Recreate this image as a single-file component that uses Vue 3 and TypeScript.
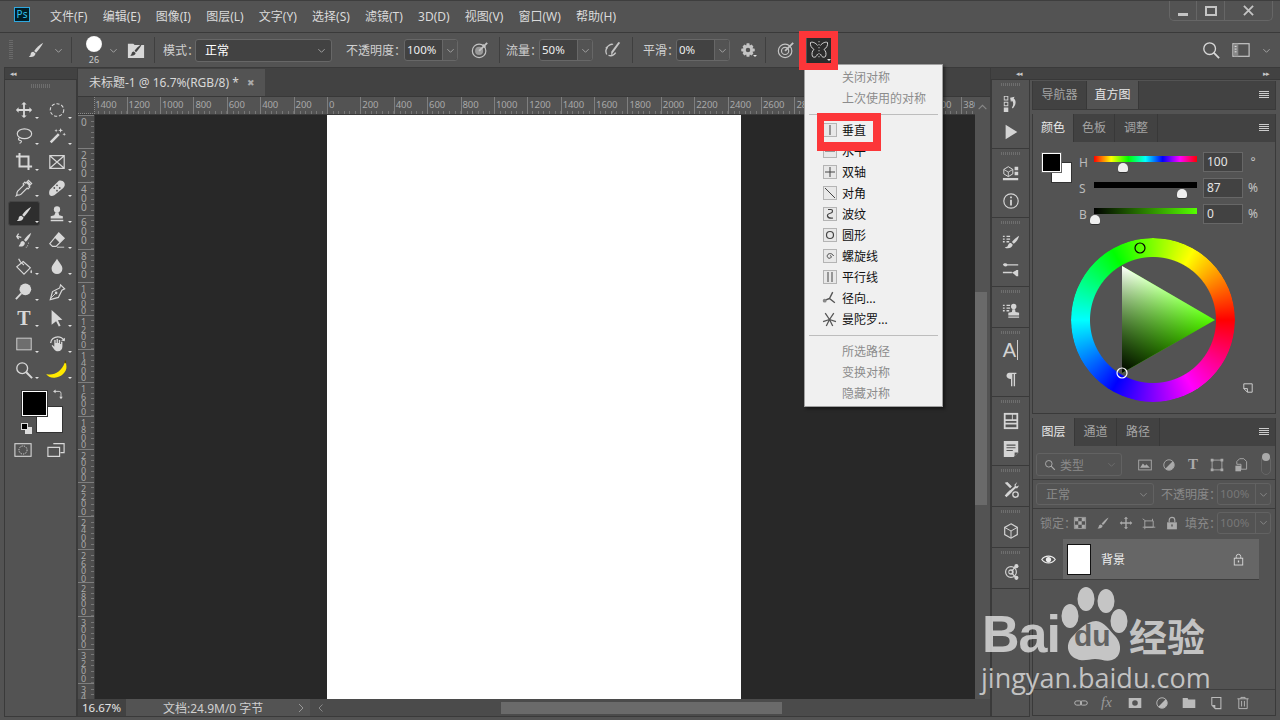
<script setup lang="ts">
const menus = ['文件(F)', '编辑(E)', '图像(I)', '图层(L)', '文字(Y)', '选择(S)', '滤镜(T)', '3D(D)', '视图(V)', '窗口(W)', '帮助(H)']

const S = 'fill="none" stroke="currentColor"'
const brush = '<path d="M18 2C14 4 10 8 8 11l2 2c3-3 6-7 8-11z"/><path d="M7 12c-2 0-3 1.500-3 3 0 1-1 2-2 2.500 3 1 7 0 7.500-3.500z"/>'
const ic: Record<string, string> = {
  move: '<path d="M10 1l3 3h-2v5h5V7l3 3-3 3v-2h-5v5h2l-3 3-3-3h2v-5H4v2l-3-3 3-3v2h5V4H7z"/>',
  marquee: `<ellipse cx="10" cy="10" rx="7.500" ry="7" ${S} stroke-width="1.200" stroke-dasharray="3.500 2"/>`,
  lasso: `<ellipse cx="10.500" cy="7.500" rx="8" ry="5.500" ${S} stroke-width="1.300"/><path d="M5 12c-2 1-1 3 1 3s1 3-1 3" ${S} stroke-width="1.300"/>`,
  wand: `<path d="M3 17l9-9 2 2-9 9z" transform="translate(-1 -1)"/><path d="M14 1l.7 2 2 .7-2 .7-.7 2-.7-2-2-.7 2-.7zM18 6l.5 1.500 1.500.5-1.500.5-.5 1.500-.5-1.500L16 8l1.500-.5zM9 2l.5 1.500L11 4l-1.500.5L9 6l-.5-1.500L7 4l1.500-.5z"/>`,
  crop: `<path d="M1 4h14v15M5 0v15h14" ${S} stroke-width="2.200"/>`,
  frame: `<path d="M2 3h16v14H2zM2 3l16 14M18 3L2 17" ${S} stroke-width="1.300"/>`,
  dropper: `<path d="M15 1.500l3.500 3.500-3 3 1 1-2 2-1-1-7 7c-1 1-3 1-4 1l-1 .500 .5-1c0-1 0-3 1-4l7-7-1-1 2-2 1 1z" ${S} stroke-width="1.300"/><path d="M14.500 2.500l3 3-2 2-3-3z"/>`,
  band: '<path d="M2 12l10-10c2-1 5 0 6 2s1 4-1 6L7 18c-2 1-4 1-5 0s-1-4 0-6z"/><g fill="#535353"><circle cx="10" cy="7" r="1"/><circle cx="13" cy="10" r="1"/><circle cx="7" cy="10" r="1"/><circle cx="10" cy="13" r="1"/></g>',
  brush,
  stamp: '<circle cx="10" cy="5" r="3.500"/><path d="M8.500 8h3l1 3.500 4 1V15H3v-2.500l4-1zM3 16.500h14V18H3z"/>',
  history: `<path d="M18 2c-3 2-6 5-8 8l2 2c3-3 5-6 6-10z"/><path d="M9 11c-2 0-3 1-3 3l-2 3c3 1 7 0 7-4z"/><path d="M2 6l5 1M4 3l-2 3 2 3" ${S} stroke-width="1.400"/><path d="M15 13v1M14 16v1M12 18h1" ${S}/>`,
  eraser: `<path d="M12 2l6 6-9 9H5l-3-3z" ${S} stroke-width="1.300"/><path d="M12 2l6 6-5 5-6-6z"/><path d="M10 18h8" ${S}/>`,
  bucket: `<path d="M9 5l8 7-7 7-8-8z" ${S} stroke-width="1.300"/><path d="M4 2c1 3 3 5 6 7" ${S} stroke-width="1.300"/><path d="M18 14c1 1.500 1.500 4 0 4s-1-2.500 0-4z"/>`,
  drop: '<path d="M10 2c2 4 6 7 6 11a6 6 0 0 1-12 0c0-4 4-7 6-11z"/>',
  dodge: `<circle cx="11.500" cy="7" r="6.500"/><path d="M7 11.500L1 18" ${S} stroke-width="2"/>`,
  pen: `<path d="M14 2l4.500 4.500-3 1.500-4 8-9 2.500 2.500-9 8-4z" ${S} stroke-width="1.300"/><circle cx="9" cy="11" r="1.500"/><path d="M3 17l5-5" ${S}/>`,
  arrow: '<path d="M4 1l12 11-5 .5 3 6-2 1-3-6-5 4z"/>',
  rect: `<rect x="2" y="3.500" width="16" height="13" fill="#6e6e6e" stroke="currentColor"/>`,
  hand: `<path d="M7 9V5.500h1.500V9h1V4.500H11V9h1V5.500h1.500V10h1V7.500H16V13c0 3-2 5-5 5-2 0-3-1-4-2l-3-4 1-1 2 2z"/><path d="M3 9c0-4 4-7 8-7 3 0 5 1 7 4" ${S} stroke-width="1.500"/><path d="M19 3l-.5 4-4-1z"/>`,
  zoom: `<circle cx="8" cy="8" r="6" ${S} stroke-width="1.500"/><path d="M12.500 12.500L19 19" ${S} stroke-width="2.200"/>`,
  banana: '<path d="M-2 14.500C6 17 15 12 18.500 2l1.500 0 .5 4c.5 6-6 12-13 12.500-4 .3-8-1-9.500-4z" fill="#ffe900"/><path d="M18.500-.5h1.500l.2 3-1.800 0z" fill="#5a4a00"/>',
  swap: `<path d="M3 4h9a3 3 0 0 1 3 3v7" ${S} stroke-width="1.500"/><path d="M6 1v6L2 4zM12 13h6l-3 4z"/>`,
  qmask: `<rect x="1" y="3" width="18" height="14" ${S} stroke-width="1.200"/><circle cx="10" cy="10" r="4.500" ${S} stroke-dasharray="1.500 1.200"/>`,
  screen: `<path d="M7 3h12v10h-4M1 7h13v10H1z" ${S} stroke-width="1.300"/>`,
  chev: `<path d="M3 7l7 7 7-7" ${S} stroke-width="2"/>`,
  panelBrush: '<path d="M1 3h6l1.500 1.500H19V19H1z" fill="#d8d8d8"/><g fill="#444" transform="translate(2 2) scale(.8)"><path d="M18 2C14 4 10 8 8 11l2 2c3-3 6-7 8-11z"/><path d="M7 12c-2 0-3 1.500-3 3 0 1-1 2-2 2.500 3 1 7 0 7.500-3.500z"/></g>',
  air: `<circle cx="9" cy="11" r="7.500" ${S} stroke-width="1.300"/><circle cx="9" cy="11" r="4.500" fill="#9a9a9a"/><path d="M9 11l9-9M13 4l3 3" ${S} stroke-width="2"/>`,
  flow: `<path d="M2 8c4-4 7-5 8-4M3 15c-2-4-1-6 1-8M5 16c3 1 6 0 8-3" ${S} stroke-width="1.500"/><path d="M18 2l-8 11-2 3 0-4 8-11z"/>`,
  gear: '<path d="M8.500 1h3l.5 2.500 2-1 2 2-1 2 2.500.5v3L15 10.500l1 2-2 2-2-1-.5 2.500h-3L8 13.500l-2 1-2-2 1-2L2.500 10V7L5 6.500l-1-2 2-2 2 1zM10 6a2.500 2.500 0 1 0 0 5 2.500 2.500 0 0 0 0-5z" transform="translate(0 1.500)"/>',
  target: `<circle cx="9" cy="11" r="7.500" ${S} stroke-width="1.300"/><circle cx="9" cy="11" r="4" ${S} stroke-width="1.300"/><path d="M9 11l9-9" ${S} stroke-width="2"/>`,
  butterfly: `<path d="M8.500 5.500C7 3 3.500 1.500 1.500 2.500 1 5.500 2.500 8 5 9.500 3 11 2.500 14 3.500 16.500c2 1.500 4 .5 5-2.500M11.500 5.500C13 3 16.500 1.500 18.500 2.500c.5 3-1 5.500-3.500 7 2 1.500 2.500 4.500 1.500 7-2 1.500-4 .5-5-2.500" ${S} stroke-width=".9"/><path d="M10 1v18" ${S} stroke-width=".8" stroke-dasharray="1.300 1.700"/>`,
  search: `<circle cx="8.500" cy="8.500" r="6.500" ${S} stroke-width="1.500"/><path d="M13 13l6 6" ${S} stroke-width="2"/>`,
  workspace: `<rect x="1" y="3" width="18" height="14" ${S} stroke-width="1.300"/><path d="M2 3h5v14H2z" fill="#888"/><path d="M3 6h2M3 9h2M3 12h2" stroke="#eee"/>`,
  history2: '<g transform="translate(2 1)"><path d="M0 0h5v5H0zM1 1v3h3V1zM0 6.500h5v5H0zM1 7.500v3h3v-3zM0 13h5v5H0z" fill-rule="evenodd"/></g><path d="M9 3l5-1-1 2c3 2 3 7-1 11l-1-1c2-3 2-6 0-8l-1 2z"/>',
  play: '<path d="M4 2l13 8-13 8z"/>',
  cube3: `<path d="M2 6l5-3 5 3v5l-5 3-5-3z" ${S} stroke-width="1.100"/><path d="M2 6l5 3 5-3M7 9v5" ${S}/><path d="M14 3h4v4h-4zM14 8.500h4v4h-4zM1 15.500h17V18H1z"/>`,
  info: `<circle cx="10" cy="10" r="8" ${S} stroke-width="1.300"/><path d="M9 8.500h2V15H9zM9 5h2v2H9z"/>`,
  listBrush: '<path d="M1 3h2v1.500H1zM5 3h4v1.500H5zM1 6h2v1.500H1zM5 6h4v1.500H5zM1 9h2v1.500H1zM5 9h3v1.500H5z"/><path d="M19 3c-3 2-6 4-8 7l2 2c3-2 5-5 6-9z"/><path d="M10 11c-3 0-3 2-4 4l-3 1c3 2 8 1 9-3z"/>',
  sliders: '<path d="M1 4c1-2 4-2 5-.5H18V5H6c-1 1.500-4 1.500-5-1zM1 12h10v1.500H1zM11 13c2-1 4-2 5-3h2v7h-2c-1-1-3-3-5-4z"/>',
  listStamp: '<path d="M1 3h2v1.500H1zM5 3h4v1.500H5zM1 6h2v1.500H1zM5 6h4v1.500H5zM1 9h2v1.500H1zM5 9h3v1.500H5z"/><circle cx="13" cy="5" r="3"/><path d="M11.500 8h3l.5 3 4 1v3H7v-3l4-1zM7 16h12v1.500H7z"/>',
  para: '<path d="M8 3h8v1.500h-1.500V18H13V4.500h-1.500V18H10v-8c-3 0-5-1.500-5-3.500S6 3 8 3z"/>',
  props: '<path d="M2 1h16v18H2z"/><g fill="#535353"><path d="M4 3h7v5H4zM12 3h4v5h-4zM4 10h12v2H4zM4 14h12v3H4z"/></g>',
  note: '<path d="M2 1h16v13l-5 5H2z"/><g fill="#535353"><path d="M5 5h10v1.300H5zM5 8h10v1.300H5zM5 11h7v1.300H5zM14 14h4l-4 4z"/></g>',
  tools: `<path d="M3 2l6 6 2-2-5-5zM9 10l-6 6 2 2 6-6z"/><path d="M17 1l-3 3v2l-9 8 2 2 8-8h2l2-3-3 1-1-1z"/><circle cx="15" cy="15" r="3" ${S} stroke-width="1.500"/>`,
  cube: `<path d="M10 2l7 4v8l-7 4-7-4V6z" ${S} stroke-width="1.300"/><path d="M3 6l7 4 7-4M10 10v8" ${S} stroke-width="1.100"/>`,
  share: `<circle cx="10" cy="10" r="6" ${S} stroke-width="1.300"/><circle cx="10" cy="10" r="3"/><path d="M10 10l6-7M10 10l6 7" ${S} stroke-width="1.300"/><circle cx="16" cy="3.500" r="2.300"/><circle cx="16" cy="16.500" r="2.300"/><circle cx="9.500" cy="10" r="1.500" fill="#535353"/>`,
  img: `<rect x="1" y="3" width="18" height="14" ${S} stroke-width="1.300"/><path d="M3 14l4-6 3 3 2-2 5 5z"/>`,
  half: `<circle cx="10" cy="10" r="7.500" ${S} stroke-width="1.300"/><path d="M15.300 4.700A7.500 7.500 0 0 1 4.700 15.300z"/>`,
  tsel: `<path d="M3 3h14v14H3z" ${S} stroke-width="1.300"/><path d="M1 1h4v4H1zM15 1h4v4h-4zM1 15h4v4H1zM15 15h4v4h-4z"/>`,
  smart: '<path d="M8 1h6l4 4v11h-8V9H4V5z" fill="none" stroke="currentColor" stroke-width="1.300"/><path d="M2 11h8v8H2z"/>',
  lens: `<circle cx="8" cy="8" r="5.500" ${S} stroke-width="1.600"/><path d="M12 12l6 6" ${S} stroke-width="2"/>`,
  checker: `<path d="M2 2h16v16H2z" ${S} stroke-width="1.200"/><path d="M3 3h4.500v4.500H3zM12.500 3H17v4.500h-4.500zM7.500 7.500h5v5h-5zM3 12.500h4.500V17H3zM12.500 12.500H17V17h-4.500z"/>`,
  art: `<path d="M4 7h12v9H4z" ${S} stroke-width="1.300"/><path d="M1 4l4 3M15 4v3M1 16h18M4 16v3" ${S} stroke-width="1.200"/>`,
  lock: `<path d="M6 9V6a4 4 0 0 1 8 0v3" ${S} stroke-width="1.600"/><path d="M3 9h14v10H3z"/><rect x="9" y="12" width="2" height="3" fill="#535353"/>`,
  lockOpen: `<path d="M6.500 8V5.500a3.500 3.500 0 0 1 7 0V8" ${S} stroke-width="1.400"/><rect x="3.500" y="8" width="13" height="10.500" ${S} stroke-width="1.400"/><rect x="9" y="11.500" width="2" height="3"/>`,
  eye: `<path d="M1 10c4-6 14-6 18 0-4 6-14 6-18 0z" ${S} stroke-width="1.500"/><circle cx="10" cy="10" r="3.500"/>`,
  link: `<rect x="1" y="7" width="10" height="6" rx="3" ${S} stroke-width="1.300"/><rect x="9" y="7" width="10" height="6" rx="3" ${S} stroke-width="1.300"/>`,
  maskI: '<path d="M1 3h18v14H1zM10 6a4 4 0 1 0 0 8 4 4 0 0 0 0-8z" fill-rule="evenodd"/>',
  folder: '<path d="M1 3h7l1 2h10v12H1z"/>',
  newL: `<path d="M4 2h13v16H9l-5-5z" ${S} stroke-width="1.500"/><path d="M4 13h5v5z"/>`,
  trash: `<path d="M2 4h16M7 4V2h6v2M4 4v14h12V4M8 7v8M12 7v8" ${S} stroke-width="1.300"/>`,
  note2: `<path d="M3 3h14v14H9L3 11z" ${S} stroke-width="1.500"/><path d="M3 11h6v6" ${S} stroke-width="1.500"/>`,
}

const tools = [
  ['move', 'marquee'], ['lasso', 'wand'], ['crop', 'frame'], ['dropper', 'band'], ['brush', 'stamp'],
  ['history', 'eraser'], ['bucket', 'drop'], ['dodge', 'pen'], ['T', 'arrow'], ['rect', 'hand'], ['zoom', 'banana'],
].flat()

const dock = [['history2', 'play'], ['cube3', 'info'], ['listBrush', 'sliders'], ['listStamp'], ['A', 'para'], ['props', 'note'], ['tools'], ['cube'], ['share']]

const hRuler: number[] = []
for (let v = -1400; v <= 3800; v += 200) hRuler.push(Math.abs(v))
const vRuler: string[][] = []
for (let v = 0; v <= 3400; v += 200) vRuler.push(String(v).split(''))

const menu1 = ['垂直', '水平', '双轴', '对角', '波纹', '圆形', '螺旋线', '平行线', '径向...', '曼陀罗...']
const shapes = [
  '<path d="M6 1v10" stroke="#444"/>',
  '<path d="M1 6h10" stroke="#444"/>',
  '<path d="M6 1v10M1 6h10" stroke="#444"/>',
  '<path d="M1 1l10 10" stroke="#444"/>',
  '<path d="M4 1.500h3c2 0 2 3 0 3.500S3 6 3.500 8 6 10.500 9 10" fill="none" stroke="#444" stroke-width="1.200"/>',
  '<circle cx="6" cy="6" r="3.500" fill="none" stroke="#444" stroke-width="1.200"/>',
  '<path d="M6 6c1-1 2 1 .5 2-2 1-4-1-3-3 1-2 5-2 6 1" fill="none" stroke="#444"/>',
  '<path d="M4 1v10M8 1v10" stroke="#444"/>',
  '<path d="M7 7l3-6M7 7l5 4M7 7L3 8.500" stroke="#555" stroke-width="1.300" fill="none"/><circle cx="2.500" cy="9" r="1.800" fill="#888"/>',
  '<path d="M7 7L3 1M7 7l4-6M7 7L1 9M7 7l6 2M7 7l-3 6M7 7l3 6" stroke="#555" stroke-width="1.200" fill="none"/>',
]
</script>

<template>
  <div class="app">
    <header class="titlebar">
      <div class="ps-logo">Ps</div>
      <nav class="menubar">
        <span v-for="m in menus" :key="m">{{ m }}</span>
      </nav>
      <div class="winbtns">
        <div class="winbtn w1"><i class="w-min"></i></div>
        <div class="winbtn w2"><i class="w-max"></i></div>
        <div class="winbtn w-close"><svg viewBox="0 0 12 12"><path d="M1 1l10 10M11 1L1 11" stroke="currentColor" stroke-width="2" /></svg></div>
      </div>
    </header>

    <section class="options">
      <div class="grip-v"></div>
      <svg class="ic opt-brush" viewBox="0 0 20 20" v-html="ic.brush"></svg>
      <svg class="ic chev c1" viewBox="0 0 20 20" v-html="ic.chev"></svg>
      <div class="sep s1"></div>
      <div class="brush-prev"><div class="brush-dot"></div><span>26</span></div>
      <svg class="ic chev c2" viewBox="0 0 20 20" v-html="ic.chev"></svg>
      <svg class="ic panel-br" viewBox="0 0 20 20" v-html="ic.panelBrush"></svg>
      <div class="sep s2"></div>
      <span class="lbl l-mode">模式：</span>
      <div class="select mode"><span>正常</span><svg class="ic chev" viewBox="0 0 20 20" v-html="ic.chev"></svg></div>
      <span class="lbl l-op">不透明度：</span>
      <div class="combo op"><span>100%</span><b><svg class="ic chev" viewBox="0 0 20 20" v-html="ic.chev"></svg></b></div>
      <svg class="ic opt-ic i-air" viewBox="0 0 20 20" v-html="ic.air"></svg>
      <div class="sep s3"></div>
      <span class="lbl l-flow">流量：</span>
      <div class="combo flow"><span>50%</span><b><svg class="ic chev" viewBox="0 0 20 20" v-html="ic.chev"></svg></b></div>
      <svg class="ic opt-ic i-flow" viewBox="0 0 20 20" v-html="ic.flow"></svg>
      <div class="sep s4"></div>
      <span class="lbl l-smooth">平滑：</span>
      <div class="combo smooth"><span>0%</span><b><svg class="ic chev" viewBox="0 0 20 20" v-html="ic.chev"></svg></b></div>
      <div class="gear-wrap"><svg class="ic opt-ic" viewBox="0 0 20 20" v-html="ic.gear"></svg></div>
      <div class="sep s5"></div>
      <svg class="ic opt-ic i-target" viewBox="0 0 20 20" v-html="ic.target"></svg>
      <div class="sym-btn"><svg class="ic" viewBox="0 0 20 20" v-html="ic.butterfly"></svg></div>
      <div class="opt-right">
        <svg class="ic i-search" viewBox="0 0 20 20" v-html="ic.search"></svg>
        <svg class="ic i-work" viewBox="0 0 20 20" v-html="ic.workspace"></svg>
        <svg class="ic chev" viewBox="0 0 20 20" v-html="ic.chev"></svg>
      </div>
    </section>

    <main class="workspace">
      <aside class="toolcol">
        <div class="strip"><span class="dbl">◂◂</span></div>
        <div class="toolbody">
          <div class="grip-h"></div>
          <div class="toolgrid">
            <div v-for="t in tools" :key="t" class="tool" :class="{ active: t === 'brush' }">
              <span v-if="t === 'T'" class="t-glyph">T</span>
              <svg v-else class="ic" viewBox="0 0 20 20" v-html="ic[t]"></svg>
            </div>
          </div>
          <div class="swatches">
            <div class="sw-bg"></div>
            <div class="sw-fg"></div>
            <svg class="ic sw-swap" viewBox="0 0 20 20" v-html="ic.swap"></svg>
            <div class="sw-def"><i></i><u></u></div>
          </div>
          <div class="modes">
            <svg class="ic" viewBox="0 0 20 20" v-html="ic.qmask"></svg>
            <svg class="ic" viewBox="0 0 20 20" v-html="ic.screen"></svg>
          </div>
        </div>
      </aside>

      <section class="doc">
        <div class="tabbar">
          <div class="doctab">未标题-1 @ 16.7%(RGB/8) *<em>✖</em></div>
        </div>
        <div class="doc-mid">
          <div class="doc-main">
            <div class="h-ruler-row">
              <div class="corner"></div>
              <div class="h-ruler">
                <div v-for="(v, i) in hRuler" :key="i" class="h-cell">{{ v }}</div>
              </div>
            </div>
            <div class="view">
              <div class="v-ruler">
                <div v-for="(d, i) in vRuler" :key="i" class="v-cell" :class="{ small: d.length > 3 }">
                  <span v-for="(c, j) in d" :key="j">{{ c }}</span>
                </div>
              </div>
              <div class="pasteboard"><div class="page"></div></div>
            </div>
          </div>
          <div class="vscroll">
            <svg class="ic sc-up" viewBox="0 0 20 20"><path d="M3 13l7-7 7 7" fill="none" stroke="currentColor" stroke-width="2" /></svg>
            <div class="sc-thumb"></div>
          </div>
        </div>
        <footer class="status">
          <div class="st-zoom">16.67%</div>
          <div class="st-info"><span>文档:24.9M/0 字节</span><svg class="ic" viewBox="0 0 20 20"><path d="M6 2l8 8-8 8" fill="none" stroke="currentColor" stroke-width="1.600" /></svg></div>
          <div class="hscroll">
            <svg class="ic" viewBox="0 0 20 20"><path d="M13 3l-7 7 7 7" fill="none" stroke="currentColor" stroke-width="2" /></svg>
            <div class="sc-hthumb"></div>
          </div>
        </footer>
      </section>

      <div class="rightcol">
        <div class="strip right"><span class="dbl">◂◂</span><span class="dbl">▸▸</span></div>
        <div class="right-row">
          <div class="dock">
            <div v-for="(g, i) in dock" :key="i" class="dock-group" :class="'g' + i">
              <div class="grip-h small"></div>
              <template v-for="d in g" :key="d">
                <span v-if="d === 'A'" class="dock-a">A<i></i></span>
                <svg v-else class="ic dock-ic" viewBox="0 0 20 20" v-html="ic[d]"></svg>
              </template>
            </div>
          </div>

          <div class="panels">
            <div class="pgroup first">
              <div class="ptabs p1">
                <span class="ptab t55">导航器</span><span class="ptab t52 on">直方图</span>
                <div class="pmenu"><i></i><i></i><i></i><i></i></div>
              </div>
            </div>

            <div class="pgroup color">
              <div class="ptabs">
                <span class="ptab t41 on">颜色</span><span class="ptab t41">色板</span><span class="ptab t43">调整</span>
                <div class="pmenu"><i></i><i></i><i></i><i></i></div>
              </div>
              <div class="color-body">
                <div class="hsb">
                  <div class="mini-sw"><div class="mb"></div><div class="mf"></div></div>
                  <div class="hsb-rows">
                    <div class="hsb-row">
                      <span class="hl">H</span>
                      <div class="bar b-h"><i style="left: 29px"></i></div>
                      <div class="val">100</div><span class="unit">°</span>
                    </div>
                    <div class="hsb-row">
                      <span class="hl">S</span>
                      <div class="bar b-s"><i style="left: 88px"></i></div>
                      <div class="val">87</div><span class="unit">%</span>
                    </div>
                    <div class="hsb-row">
                      <span class="hl">B</span>
                      <div class="bar b-b"><i style="left: 1px"></i></div>
                      <div class="val">0</div><span class="unit">%</span>
                    </div>
                  </div>
                </div>
                <div class="wheel-wrap">
                  <div class="wheel"></div>
                  <svg class="tri" viewBox="0 0 164 164">
                    <defs>
                      <linearGradient id="tw" gradientUnits="userSpaceOnUse" x1="51" y1="28" x2="97.500" y2="108.500"><stop offset="0" stop-color="#fff" /><stop offset="1" stop-color="#fff" stop-opacity="0" /></linearGradient>
                      <linearGradient id="tk" gradientUnits="userSpaceOnUse" x1="51" y1="135" x2="97.500" y2="55"><stop offset="0" stop-color="#000" /><stop offset="1" stop-color="#000" stop-opacity="0" /></linearGradient>
                    </defs>
                    <path d="M51 28L144 82 51 135z" fill="#55ff00" />
                    <path d="M51 28L144 82 51 135z" fill="url(#tw)" />
                    <path d="M51 28L144 82 51 135z" fill="url(#tk)" />
                    <circle cx="69" cy="10" r="5" fill="none" stroke="#000" stroke-width="1.200" />
                    <circle cx="51" cy="135" r="5" fill="none" stroke="#fff" stroke-width="1.200" />
                  </svg>
                  <svg class="ic note-ic" viewBox="0 0 20 20" v-html="ic.note2"></svg>
                </div>
              </div>
            </div>

            <div class="pgroup layers">
              <div class="ptabs">
                <span class="ptab t42 on">图层</span><span class="ptab t42">通道</span><span class="ptab t43">路径</span>
                <div class="pmenu"><i></i><i></i><i></i><i></i></div>
              </div>
              <div class="lrow r-filter">
                <div class="select dim f-sel"><svg class="ic lens" viewBox="0 0 20 20" v-html="ic.lens"></svg><span>类型</span><svg class="ic chev" viewBox="0 0 20 20" v-html="ic.chev"></svg></div>
                <div class="f-icons">
                  <svg class="ic" viewBox="0 0 20 20" v-html="ic.img"></svg>
                  <svg class="ic" viewBox="0 0 20 20" v-html="ic.half"></svg>
                  <span class="f-t">T</span>
                  <svg class="ic" viewBox="0 0 20 20" v-html="ic.tsel"></svg>
                  <svg class="ic" viewBox="0 0 20 20" v-html="ic.smart"></svg>
                </div>
                <div class="toggle"><i></i></div>
              </div>
              <div class="lrow r-blend">
                <div class="select dim b-sel"><span>正常</span><svg class="ic chev" viewBox="0 0 20 20" v-html="ic.chev"></svg></div>
                <span class="lbl-dim">不透明度：</span>
                <div class="combo dim"><span>100%</span><b><svg class="ic chev" viewBox="0 0 20 20" v-html="ic.chev"></svg></b></div>
              </div>
              <div class="lrow r-lock">
                <span class="lbl-dim lk">锁定：</span>
                <div class="lk-icons">
                  <svg class="ic" viewBox="0 0 20 20" v-html="ic.checker"></svg>
                  <svg class="ic" viewBox="0 0 20 20" v-html="ic.brush"></svg>
                  <svg class="ic" viewBox="0 0 20 20" v-html="ic.move"></svg>
                  <svg class="ic" viewBox="0 0 20 20" v-html="ic.art"></svg>
                  <svg class="ic" viewBox="0 0 20 20" v-html="ic.lock"></svg>
                </div>
                <span class="lbl-dim fill">填充：</span>
                <div class="combo dim"><span>100%</span><b><svg class="ic chev" viewBox="0 0 20 20" v-html="ic.chev"></svg></b></div>
              </div>
              <div class="layer-row">
                <div class="eye-cell"><svg class="ic" viewBox="0 0 20 20" v-html="ic.eye"></svg></div>
                <div class="layer-main">
                  <div class="thumb"></div>
                  <span>背景</span>
                  <svg class="ic" viewBox="0 0 20 20" v-html="ic.lockOpen"></svg>
                </div>
              </div>
              <div class="layer-rest"></div>
              <div class="lfoot">
                <svg class="ic" viewBox="0 0 20 20" v-html="ic.link"></svg>
                <span class="fx">fx</span>
                <svg class="ic" viewBox="0 0 20 20" v-html="ic.maskI"></svg>
                <svg class="ic" viewBox="0 0 20 20" v-html="ic.half"></svg>
                <svg class="ic" viewBox="0 0 20 20" v-html="ic.folder"></svg>
                <svg class="ic" viewBox="0 0 20 20" v-html="ic.newL"></svg>
                <svg class="ic" viewBox="0 0 20 20" v-html="ic.trash"></svg>
              </div>
            </div>
          </div>
        </div>
      </div>
    </main>

    <!-- symmetry menu + annotation boxes lie over everything -->
    <div class="popmenu">
      <div class="mi off">关闭对称</div>
      <div class="mi off">上次使用的对称</div>
      <div class="msep"></div>
      <div v-for="(m, i) in menu1" :key="m" class="mi">
        <svg v-if="i < 8" class="mbox" viewBox="0 0 12 12" v-html="shapes[i]"></svg>
        <svg v-else class="mbox bare" viewBox="0 0 14 14" v-html="shapes[i]"></svg>
        {{ m }}
      </div>
      <div class="msep"></div>
      <div class="mi off">所选路径</div>
      <div class="mi off">变换对称</div>
      <div class="mi off">隐藏对称</div>
    </div>
    <div class="redbox rb1"></div>
    <div class="redbox rb2"></div>

    <div class="watermark">
      <svg class="paw" viewBox="0 0 70 90">
        <ellipse cx="28" cy="18" rx="8.500" ry="12" />
        <ellipse cx="48" cy="20" rx="8.500" ry="12" />
        <ellipse cx="12" cy="35" rx="8.500" ry="12" />
        <ellipse cx="61" cy="40" rx="8.500" ry="12" />
        <path d="M38 40c8 0 14 10 20 16 6 7 6 20-4 23-6 2-11-1-17-1s-12 3-18 0C8 74 8 62 14 56c6-6 14-16 24-16z" />
      </svg>
      <span class="wm-bai">Bai</span>
      <span class="wm-du">du</span>
      <span class="wm-cn">经验</span>
      <span class="wm-url">jingyan.baidu.com</span>
    </div>
  </div>
</template>

<style scoped>
.app {
  position: relative;
  width: 1280px;
  height: 720px;
  overflow: hidden;
  display: flex;
  flex-direction: column;
  background: #535353;
  color: #dcdcdc;
  font: 12px "Noto Sans", "Noto Sans CJK SC", sans-serif;
}
.ic { display: block; width: 18px; height: 18px; fill: currentColor; color: #d8d8d8; flex-shrink: 0; overflow: visible; }
.chev { width: 9px; height: 9px; color: #a8a8a8; }

.titlebar {
  flex-shrink: 0;
  display: flex;
  align-items: flex-start;
  border-top: 1px solid #3e3e3e;
  border-bottom: 1px solid #3a3a3a;
  height: 31px;
}
.ps-logo {
  width: 14px;
  height: 13px;
  margin: 6px 0 0 14px;
  border: 1px solid #2fa8e0;
  background: #001d26;
  color: #31c5f0;
  font-size: 10px;
  line-height: 13px;
  text-align: center;
}
.menubar { display: flex; gap: 15.200px; margin: 7px 0 0 20px; line-height: 17px; color: #dadada; white-space: nowrap; }
.winbtns {
  margin-left: auto;
  margin-right: 7px;
  display: flex;
  height: 19px;
  border: 1px solid #666;
  border-top: 0;
  border-radius: 0 0 5px 5px;
}
.winbtn { display: flex; align-items: center; justify-content: center; border-left: 1px solid #666; color: #c4c4c4; }
.w1 { width: 26px; border-left: 0; }
.w2 { width: 27px; }
.w-close { width: 47px; }
.w-close svg { width: 11px; height: 11px; }
.w-min { width: 10px; height: 3px; background: #c4c4c4; margin-top: 7px; }
.w-max { width: 8px; height: 6px; border: 2px solid #c4c4c4; }

.options {
  height: 34px;
  flex-shrink: 0;
  margin-left: 4px;
  display: flex;
  align-items: center;
  border-bottom: 1px solid #3a3a3a;
}
.grip-v { width: 4px; height: 20px; margin-left: 5px; background: repeating-linear-gradient(#6a6a6a 0 1px, transparent 1px 2px); }
.opt-brush { margin-left: 14px; }
.c1 { margin-left: 9px; }
.sep { width: 1px; height: 26px; background: #3f3f3f; flex-shrink: 0; }
.s1 { margin-left: 8px; }
.brush-prev { width: 22px; margin-left: 11px; display: flex; flex-direction: column; align-items: center; }
.brush-dot { width: 16px; height: 16px; border-radius: 50%; background: radial-gradient(#fff 60%, #bbb 100%); margin-top: 1px; }
.brush-prev span { font-size: 9px; line-height: 11px; margin-top: 2px; color: #ccc; }
.c2 { margin-left: 4px; }
.panel-br { margin-left: 9px; }
.s2 { margin-left: 9px; }
.lbl { white-space: nowrap; color: #d0d0d0; flex-shrink: 0; }
.l-mode { margin-left: 8px; width: 32px; }
.select {
  display: flex;
  align-items: center;
  justify-content: space-between;
  box-sizing: border-box;
  border: 1px solid #676767;
  border-radius: 3px;
  background: #424242;
  padding: 0 5px 0 9px;
  flex-shrink: 0;
}
.mode { width: 137px; height: 23px; color: #fff; }
.l-op { margin-left: 14px; width: 58px; }
.combo {
  display: flex;
  align-items: stretch;
  box-sizing: border-box;
  width: 54px;
  height: 22px;
  border: 1px solid #676767;
  border-radius: 3px;
  background: #424242;
  color: #eee;
  flex-shrink: 0;
}
.combo span { flex: 1; padding-left: 2px; line-height: 20px; font-size: 11.500px; white-space: nowrap; }
.combo b { width: 14px; border-left: 1px solid #676767; background: #535353; display: flex; align-items: center; justify-content: center; border-radius: 0 3px 3px 0; }
.opt-ic { width: 18px; height: 18px; color: #c4c4c4; }
.i-air { margin-left: 13px; }
.s3 { margin-left: 10px; }
.l-flow { margin-left: 6px; width: 33px; }
.i-flow { margin-left: 11px; }
.s4 { margin-left: 10px; }
.l-smooth { margin-left: 10px; width: 33px; }
.gear-wrap { margin-left: 9px; position: relative; }
.gear-wrap::after, .sym-btn::after, .tool::after {
  content: "";
  position: absolute;
  right: 0;
  bottom: 0;
  border: 2px solid transparent;
  border-top-color: #e0e0e0;
}
.s5 { margin-left: 8px; }
.i-target { margin-left: 11px; }
.sym-btn {
  position: relative;
  width: 24px;
  height: 25px;
  margin-left: 12px;
  background: #2c2c2c;
  display: flex;
  align-items: center;
  justify-content: center;
}
.sym-btn .ic { width: 20px; height: 20px; color: #e4e4e4; }
.opt-right { margin-left: auto; margin-right: 9px; display: flex; align-items: center; gap: 12px; }
.i-work { color: #c8c8c8; }

.workspace { flex: 1; min-height: 0; display: flex; padding: 0 0 3px 4px; }
.strip {
  height: 12px;
  background: #424242;
  border-bottom: 1px solid #383838;
  box-sizing: border-box;
  display: flex;
  align-items: center;
  padding-left: 5px;
  flex-shrink: 0;
}
.dbl { font-size: 7px; letter-spacing: -1px; color: #c8c8c8; line-height: 8px; }
.toolcol { width: 73px; flex-shrink: 0; display: flex; flex-direction: column; border-left: 1px solid #3a3a3a; box-sizing: border-box; }
.toolbody { flex: 1; border-right: 1px solid #3a3a3a; border-bottom: 1px solid #3a3a3a; }
.grip-h { width: 20px; height: 4px; margin: 4px auto 0; background: repeating-linear-gradient(90deg, #6e6e6e 0 1px, transparent 1px 2px); }
.toolgrid { display: grid; grid-template-columns: 32px 32px; grid-auto-rows: 25px; gap: 1px 1px; margin: 9px 0 0 3px; }
.tool { position: relative; display: flex; align-items: center; justify-content: center; border-radius: 3px; border: 1px solid transparent; box-sizing: border-box; }
.tool.active { background: #2e2e2e; border-color: #454545; }
.t-glyph { font: bold 20px/1 "Liberation Serif", serif; color: #d8d8d8; }
.swatches { position: relative; height: 44px; margin-top: 9px; }
.sw-fg, .sw-bg { position: absolute; box-sizing: border-box; width: 25px; height: 25px; }
.sw-fg { left: 17px; top: 0; background: #000; border: 1px solid #fff; outline: 1px solid #333; }
.sw-bg { left: 32px; top: 16px; background: #fff; outline: 1px solid #333; }
.sw-swap { position: absolute; left: 47px; top: -2px; width: 12px; height: 12px; }
.sw-def { position: absolute; left: 16px; top: 32px; width: 11px; height: 11px; }
.sw-def i { position: absolute; right: 0; bottom: 0; width: 7px; height: 7px; background: #ddd; }
.sw-def u { position: absolute; left: 0; top: 0; width: 7px; height: 7px; background: #000; border: 1px solid #ddd; box-sizing: border-box; }
.modes { display: flex; gap: 15px; margin: 6px 0 0 9px; }

.doc { width: 913px; flex-shrink: 0; display: flex; flex-direction: column; margin-left: 0; border-left: 1px solid #3a3a3a; box-sizing: border-box; }
.tabbar { height: 29px; flex-shrink: 0; background: #424242; padding-top: 1px; box-sizing: border-box; border-bottom: 1px solid #383838; }
.doctab { width: 187px; height: 27px; background: #535353; line-height: 27px; padding-left: 11px; box-sizing: border-box; color: #d8d8d8; white-space: nowrap; position: relative; }
.doctab em { position: absolute; left: 169px; top: 0; font-style: normal; font-size: 9px; color: #aaa; }
.doc-mid { flex: 1; min-height: 0; display: flex; }
.doc-main { flex: 1; min-width: 0; display: flex; flex-direction: column; }
.h-ruler-row { height: 18px; display: flex; flex-shrink: 0; border-bottom: 1px solid #3a3a3a; box-sizing: border-box; }
.corner { width: 17px; flex-shrink: 0; box-sizing: border-box; background: #4a4a4a; border-right: 1px dotted #8a8a8a; border-bottom: 1px dotted #8a8a8a; }
.h-ruler { flex: 1; min-width: 0; display: flex; overflow: hidden; }
.h-cell {
  width: 33.400px;
  flex-shrink: 0;
  box-sizing: border-box;
  border-left: 1px solid #7e7e7e;
  padding-left: 1px;
  font-size: 9.500px;
  line-height: 15px;
  color: #a8a8a8;
  background: repeating-linear-gradient(90deg, transparent 0 4.567px, #777 4.567px 5.567px) bottom / 100% 3px no-repeat;
  letter-spacing: -.1px;
}
.h-cell:first-child { margin-left: -1.800px; }
.view { flex: 1; min-height: 0; display: flex; }
.v-ruler { width: 17px; flex-shrink: 0; overflow: hidden; background: #4d4d4d; border-right: 1px solid #3a3a3a; box-sizing: border-box; }
.v-cell {
  height: 33.400px;
  box-sizing: border-box;
  border-top: 1px solid #7e7e7e;
  padding: 2px 0 0 3px;
  display: flex;
  flex-direction: column;
  font-size: 10px;
  line-height: 9px;
  color: #a8a8a8;
  overflow: hidden;
  background: repeating-linear-gradient(transparent 0 4.567px, #777 4.567px 5.567px) right / 3px 100% no-repeat;
}
.v-cell.small { font-size: 9px; line-height: 7.500px; }
.pasteboard { flex: 1; min-width: 0; background: #282828; }
.page { width: 414px; height: 100%; margin-left: 232px; background: #fff; }
.vscroll { width: 15px; flex-shrink: 0; display: flex; flex-direction: column; background: #535353; }
.sc-up { width: 11px; height: 11px; margin: 5px 0 0 2px; color: #888; }
.sc-thumb { width: 12px; height: 213px; margin-top: 179px; background: #6a6a6a; }
.status { height: 17px; flex-shrink: 0; display: flex; border-bottom: 1px solid #3a3a3a; }
.st-zoom { width: 48px; flex-shrink: 0; background: #424242; padding-left: 4px; box-sizing: border-box; line-height: 17px; font-size: 11.500px; color: #e4e4e4; }
.st-info { width: 184px; flex-shrink: 0; display: flex; align-items: center; justify-content: space-between; padding: 0 4px 0 37px; box-sizing: border-box; color: #cfcfcf; }
.st-info .ic { width: 10px; height: 10px; color: #aaa; }
.hscroll { flex: 1; background: #4b4b4b; display: flex; align-items: center; padding-left: 6px; }
.hscroll .ic { width: 10px; height: 10px; color: #888; }
.sc-hthumb { width: 281px; height: 12px; margin-left: 175px; background: #6a6a6a; }

.rightcol { flex: 1; min-width: 0; display: flex; flex-direction: column; border-left: 1px solid #3a3a3a; margin-left: 0; }
.strip.right { justify-content: space-between; padding: 0 11px 0 25px; }
.right-row { flex: 1; min-height: 0; display: flex; }
.dock { width: 39px; flex-shrink: 0; display: flex; flex-direction: column; border-right: 1px solid #3a3a3a; border-bottom: 1px solid #3a3a3a; border-left: 1px solid #3a3a3a; box-sizing: border-box; margin-left: 0; }
.dock-group { display: flex; flex-direction: column; align-items: center; border-bottom: 1px solid #3a3a3a; box-sizing: border-box; height: 69px; }
.dock-group .grip-h.small { margin: 3px auto 0; height: 3px; }
.dock-ic { margin-top: 9px; color: #d4d4d4; }
.dock-group .dock-ic + .dock-ic { margin-top: 10px; }
.g3, .g6, .g7, .g8 { height: 41px; }
.dock-a { font: 20px/22px "Liberation Sans", sans-serif; margin-top: 5px; color: #d4d4d4; display: flex; align-items: center; }
.dock-a i { display: block; width: 1px; height: 20px; background: #ccc; margin-left: 1px; }
.panels { flex: 1; min-width: 0; display: flex; flex-direction: column; padding-left: 2px; margin-right: 4px; gap: 4px; }
.pgroup { border: 1px solid #3a3a3a; border-top: 0; box-sizing: border-box; }
.pgroup.first { margin-top: 1px; }
.ptabs { position: relative; height: 28px; display: flex; background: #424242; flex-shrink: 0; }
.ptab { box-sizing: border-box; text-align: center; line-height: 28px; color: #a4a4a4; border-right: 1px solid #383838; }
.ptab.on { background: #535353; color: #e8e8e8; }
.t55 { width: 54px; } .t52 { width: 52px; } .t41 { width: 41px; } .t43 { width: 43px; } .t42 { width: 42px; }
.pmenu { position: absolute; right: 6px; top: 10px; display: flex; flex-direction: column; gap: 1px; }
.pmenu i { display: block; width: 10px; height: 1px; background: #ccc; }
.color-body { height: 271px; }
.hsb { display: flex; padding: 10px 0 0 9px; }
.mini-sw { position: relative; width: 30px; height: 30px; flex-shrink: 0; margin-top: 1px; }
.mf, .mb { position: absolute; width: 19px; height: 19px; box-sizing: border-box; }
.mf { left: 0; top: 0; background: #000; border: 1px solid #fff; outline: 1px solid #666; }
.mb { left: 10px; top: 10px; background: #fff; outline: 1px solid #333; }
.hsb-rows { display: flex; flex-direction: column; gap: 6px; margin-left: 7px; }
.hsb-row { display: flex; height: 20px; }
.hl { width: 15px; line-height: 20px; color: #bbb; padding-top: 1px; }
.bar { position: relative; width: 103px; height: 6px; margin-top: 4px; }
.bar i { position: absolute; top: 7px; width: 10px; height: 9px; margin-left: -5px; background: #eee; border-radius: 5px 5px 2px 2px; box-shadow: 0 1px 0 #333; }
.b-h { background: linear-gradient(90deg, #f00, #ff0, #0f0, #0ff, #00f, #f0f, #f00); }
.b-s { background: #000; }
.b-b { background: linear-gradient(90deg, #000, #55ff00); }
.val { width: 40px; height: 20px; margin-left: 6px; box-sizing: border-box; border: 1px solid #676767; background: #424242; color: #e4e4e4; line-height: 18px; padding-left: 3px; }
.unit { margin-left: 4px; width: 12px; text-align: center; color: #c4c4c4; line-height: 20px; }
.wheel-wrap { position: relative; width: 164px; height: 164px; margin: 14px 0 0 38px; }
.wheel {
  position: absolute;
  inset: 0;
  border-radius: 50%;
  background: conic-gradient(from 90deg, #f00, #f0f, #00f, #0ff, #0f0, #ff0, #f00);
  -webkit-mask: radial-gradient(circle closest-side, transparent 62.500px, #000 63.500px);
  mask: radial-gradient(circle closest-side, transparent 62.500px, #000 63.500px);
}
.tri { position: absolute; inset: 0; }
.note-ic { position: absolute; right: -19px; bottom: 8px; width: 12px; height: 12px; }
.layers { flex: 1; display: flex; flex-direction: column; min-height: 0; margin-bottom: 1px; }
.lrow { display: flex; align-items: center; border-bottom: 1px solid #3c3c3c; box-sizing: border-box; flex-shrink: 0; }
.r-filter { height: 34px; padding: 4px 0 0 3px; }
.dim { color: #8a8a8a; border-color: #626262; background: transparent; }
.dim .ic { color: #8a8a8a; }
.f-sel { width: 86px; height: 23px; justify-content: flex-start; padding-left: 7px; gap: 4px; }
.f-sel .chev { margin-left: auto; color: #6e6e6e; }
.lens { width: 12px; height: 12px; color: #aaa !important; }
.f-icons { display: flex; align-items: center; gap: 10px; margin-left: 16px; }
.f-icons .ic { width: 14px; height: 14px; color: #aaa; }
.f-t { width: 14px; font: bold 15px/1 "Liberation Serif", serif; color: #aaa; text-align: center; }
.toggle { position: relative; width: 8px; height: 18px; margin-left: 13px; border: 1px solid #666; border-radius: 5px; }
.toggle i { position: absolute; left: 0; top: -3px; width: 8px; height: 8px; border-radius: 50%; background: #aaa; }
.r-blend { height: 29px; padding-left: 3px; }
.b-sel { width: 118px; height: 22px; }
.lbl-dim { color: #8a8a8a; white-space: nowrap; }
.r-blend .lbl-dim { margin-left: 7px; width: 56px; }
.combo.dim { color: #777; }
.combo.dim b { background: transparent; border-color: #626262; }
.r-lock { height: 30px; padding: 0 0 3px 7px; border-bottom: 0; }
.lk { width: 30px; }
.lk-icons { display: flex; gap: 9px; margin: 0 6px 0 3px; align-items: center; }
.lk-icons .ic { width: 14px; height: 14px; color: #aaa; }
.fill { width: 32px; }
.layer-row { height: 41px; flex-shrink: 0; display: flex; border-bottom: 1px solid #3e3e3e; box-sizing: border-box; margin-right: 16px; }
.eye-cell { width: 30px; display: flex; align-items: center; justify-content: center; }
.eye-cell .ic { width: 15px; height: 15px; color: #eee; }
.layer-main { flex: 1; background: #666; display: flex; align-items: center; padding-left: 4px; color: #eee; }
.thumb { width: 24px; height: 31px; background: #fff; box-sizing: border-box; border: 1px solid #111; margin-right: 10px; }
.layer-main .ic { margin-left: auto; margin-right: 14px; width: 13px; height: 13px; }
.layer-rest { flex: 1; }
.lfoot { height: 25px; flex-shrink: 0; display: flex; align-items: center; justify-content: flex-end; gap: 13px; padding-right: 25px; border-top: 1px solid #3e3e3e; }
.lfoot .ic { width: 14px; height: 14px; color: #bbb; }
.fx { font: italic 15px/1 "Liberation Serif", serif; color: #999; width: 14px; }

.popmenu {
  position: absolute;
  left: 804px;
  top: 64px;
  width: 139px;
  height: 343px;
  box-sizing: border-box;
  background: #f0f0f0;
  border: 1px solid #a0a0a0;
  box-shadow: 2px 2px 3px rgba(0, 0, 0, .45);
  padding-top: 2px;
  color: #111;
}
.mi { height: 21px; line-height: 21px; padding-left: 37px; position: relative; white-space: nowrap; }
.mi.off { color: #8c8c8c; }
.msep { height: 1px; margin: 5px 4px 5px; background: #bdbdbd; }
.mbox { position: absolute; left: 19px; top: 4px; width: 12px; height: 12px; background: #e8e8e8; outline: 1px solid #b4b4b4; }
.mbox.bare { background: none; outline: 0; left: 17px; width: 15px; height: 15px; top: 3px; }
.redbox { position: absolute; box-sizing: border-box; border: 7px solid #fc3639; }
.rb1 { left: 799px; top: 31px; width: 39px; height: 39px; }
.rb2 { left: 817px; top: 113px; width: 64px; height: 38px; border-width: 8px 8px 9px 7px; }

.watermark { position: absolute; left: 0; top: 0; width: 1280px; height: 720px; pointer-events: none; color: rgba(222, 222, 222, .82); }
.paw { position: absolute; left: 1058px; top: 581px; width: 70px; height: 90px; fill: rgba(222, 222, 222, .82); }
.wm-bai { position: absolute; left: 982px; top: 606px; font: bold 52px/56px "Liberation Sans", sans-serif; letter-spacing: -1px; }
.wm-du { position: absolute; left: 1074px; top: 620px; font: bold 30px/32px "Liberation Sans", sans-serif; color: #626262; }
.wm-cn { position: absolute; left: 1129px; top: 608px; font: bold 38px/54px "Noto Sans CJK SC", sans-serif; }
.wm-url { position: absolute; left: 981px; top: 659px; font: 27px/38px "Open Sans", sans-serif; }
</style>

<style>
html, body { background: #535353; }
</style>
